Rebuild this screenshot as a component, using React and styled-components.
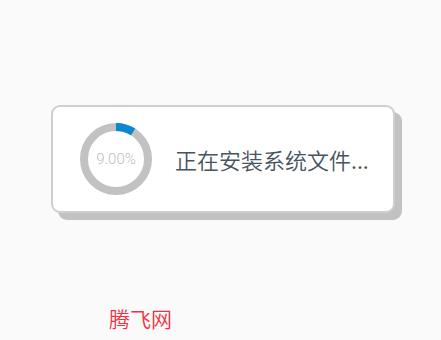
import React from 'react';
import styled, { createGlobalStyle } from 'styled-components';

const GlobalStyle = createGlobalStyle`
    html, body { margin: 0; padding: 0; background: #fafafa; }
    body { font-family: "Noto Sans", "Noto Sans CJK SC", sans-serif; }
`;

const Page = styled.div`
    width: 441px; height: 340px;
    box-sizing: border-box;
    padding: 105px 0 0 51px;
    display: flex; flex-direction: column;
`;

const Card = styled.div`
    width: 344px; height: 108px;
    box-sizing: border-box;
    background: #fff;
    border: 2px solid #cfcfcf;
    border-radius: 9px;
    box-shadow: 7px 7px 0 #c2c2c2;
    display: flex; align-items: center;
    padding-left: 27px; gap: 23px;
`;

const Ring = styled.div`
    position: relative;
    width: 72px; height: 72px;
    flex-shrink: 0;

    svg { display: block; }
`;

const Percent = styled.span`
    position: absolute; inset: 0;
    display: flex; align-items: center; justify-content: center;
    font-family: Roboto, "Noto Sans", sans-serif;
    font-weight: 300;
    font-size: 15px; color: #bdbdbd;
`;

const Message = styled.div`
    font-family: "Noto Sans CJK SC", sans-serif;
    font-size: 22px; color: #46545e;
    font-weight: 350;
`;

const Footer = styled.div`
    margin: 93px 0 0 58px;
    font-family: "Noto Sans CJK SC", sans-serif;
    font-size: 21px; line-height: 24px;
    font-weight: 350;
    color: #f4303f;
`;

const ProgressRing = ({ value }) => {
    const r = 32;
    const c = 2 * Math.PI * r;
    return (
        <Ring>
            <svg width="72" height="72" viewBox="0 0 72 72">
                <circle cx="36" cy="36" r={r} fill="none" stroke="#c2c2c2" strokeWidth="8" />
                <circle
                    cx="36" cy="36" r={r} fill="none"
                    stroke="#0a86d2" strokeWidth="8"
                    strokeDasharray={`${c * value / 100} ${c}`}
                    transform="rotate(-90 36 36)"
                />
            </svg>
            <Percent>{value.toFixed(2)}%</Percent>
        </Ring>
    );
};

const App = () => (
    <>
        <GlobalStyle />
        <Page>
            <Card>
                <ProgressRing value={9} />
                <Message>正在安装系统文件...</Message>
            </Card>
            <Footer>腾飞网</Footer>
        </Page>
    </>
);

export default App;
